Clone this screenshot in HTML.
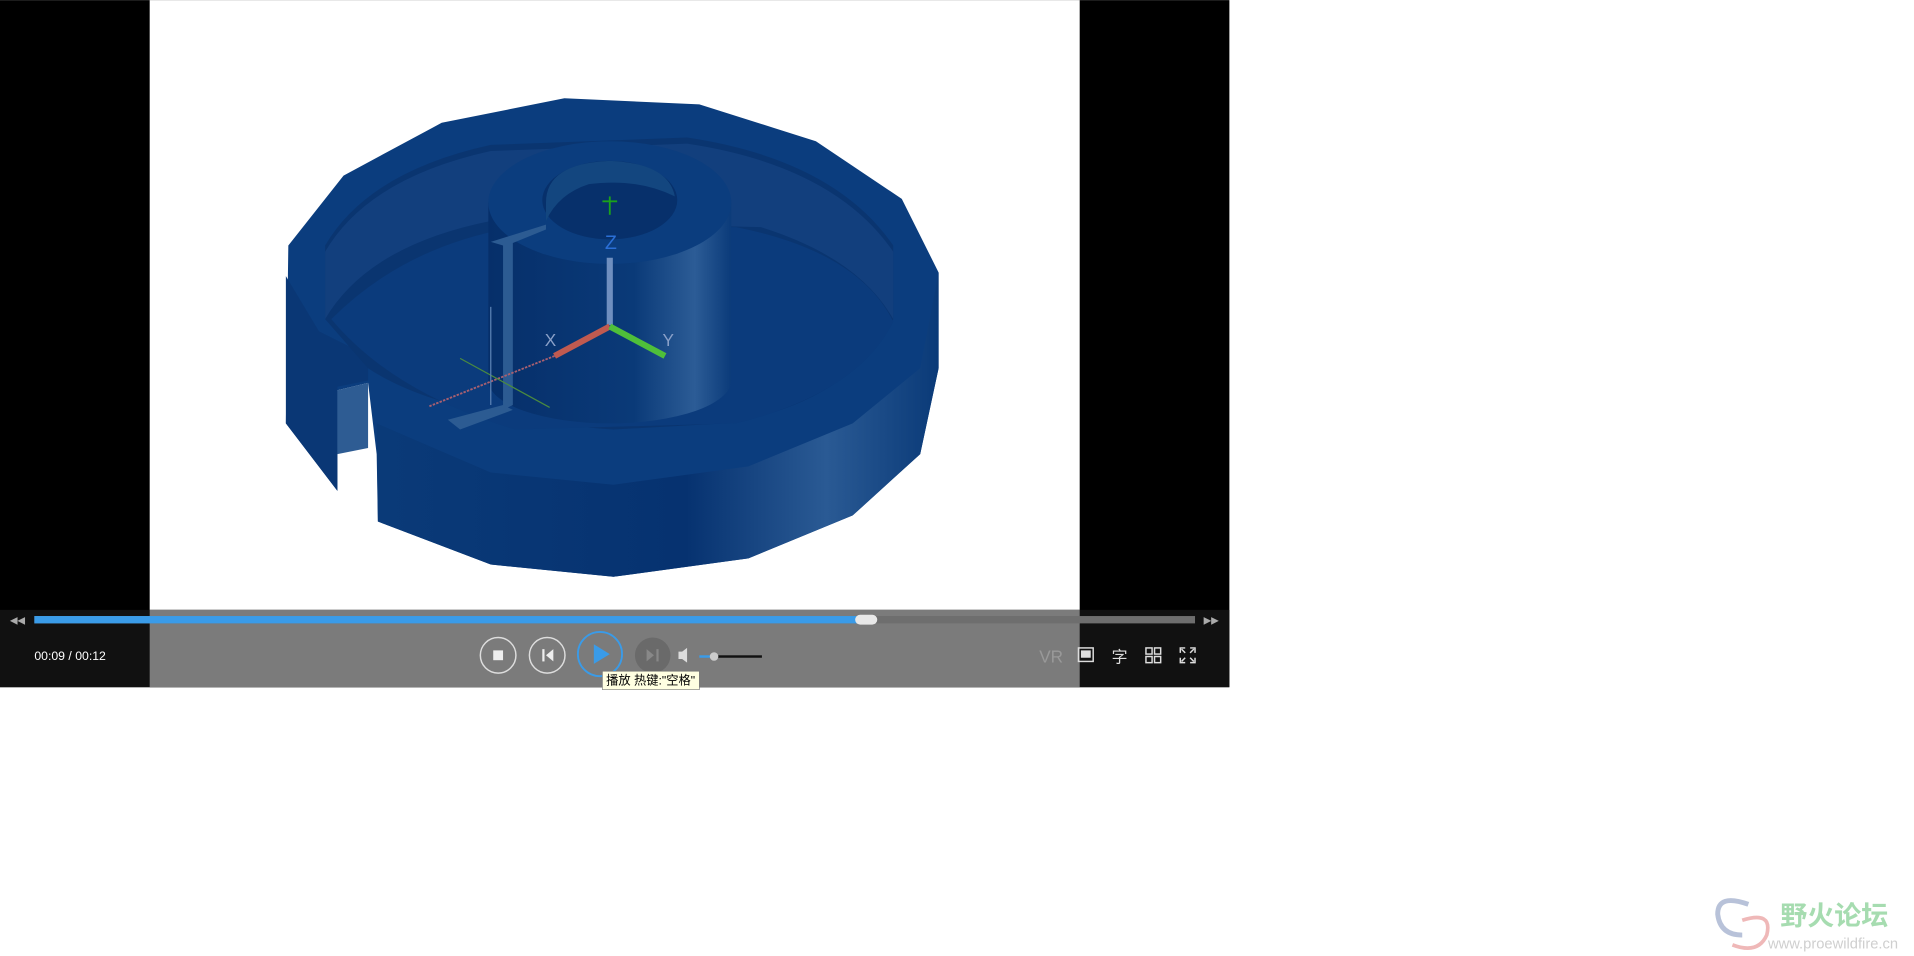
<!DOCTYPE html>
<html><head><meta charset="utf-8"><style>
html,body{margin:0;padding:0;background:#fff;width:1914px;height:956px;overflow:hidden}
svg{display:block}
</style></head><body>
<svg width="1914" height="956" viewBox="0 0 1560 779" xmlns="http://www.w3.org/2000/svg">
<defs>
<linearGradient id="side" x1="0" x2="1" y1="0" y2="0">
<stop offset="0" stop-color="#0a3a78"/><stop offset="0.55" stop-color="#063270"/><stop offset="0.8" stop-color="#2a5a94"/><stop offset="1" stop-color="#0a3a78"/>
</linearGradient>
<linearGradient id="cyl" x1="0" x2="1">
<stop offset="0" stop-color="#062f6a"/><stop offset="0.6" stop-color="#0a3a78"/><stop offset="0.85" stop-color="#2c5c96"/><stop offset="1" stop-color="#0b3b7a"/>
</linearGradient>
</defs>
<rect x="0" y="0" width="1002" height="560" fill="#000"/>
<rect x="122" y="0" width="758" height="497" fill="#fff"/>
<!-- model -->
<polygon points="235,200 280,143 360,100 460,80 570,85 665,115 735,162 765,222 765,300 750,370 695,420 610,455 500,470 400,460 308,425 307,370 300,312 275,318 275,400 233,345" fill="#0b3d7e"/>
<polygon points="307,345 400,385 500,395 610,380 695,345 750,300 765,222 765,300 750,370 695,420 610,455 500,470 400,460 308,425" fill="url(#side)"/>
<polygon points="233,225 233,345 275,400 275,315 300,310 300,290 260,270" fill="#0a3775"/>
<polygon points="275,318 300,312 300,365 275,370" fill="#2e5c93"/>
<!-- inner ring wall -->
<path d="M265,260 L265,200 Q300,140 400,118 L560,112 Q680,130 728,200 L728,260 Q690,330 590,345 L500,350 Q360,340 300,300 Z" fill="#0a3570"/>
<path d="M265,260 L265,205 Q300,145 400,123 L560,117 Q680,135 728,205 L728,260 Q700,210 620,185 L400,180 Q300,200 265,260 Z" fill="#123f7d"/>
<path d="M270,260 Q330,200 420,185 L600,185 Q700,205 728,262 Q700,320 600,345 L420,350 Q320,320 270,260 Z" fill="#0b3b7c"/>
<!-- cylinder -->
<rect x="398" y="165" width="198" height="145" fill="url(#cyl)"/>
<ellipse cx="497" cy="310" rx="99" ry="35" fill="url(#cyl)"/>
<ellipse cx="497" cy="165" rx="99" ry="50" fill="#0b3d7e"/>
<ellipse cx="497" cy="163" rx="55" ry="32" fill="#07306b"/>
<path d="M445,165 Q445,133 497,131 Q545,133 550,160 Q520,145 480,150 Q455,158 445,180 Z" fill="#13467f"/>
<polygon points="400,197 445,183 445,187 418,198 418,330 410,334 410,200" fill="#2c5b92"/>
<polygon points="365,342 410,330 418,334 375,350" fill="#2c5b92"/>
<!-- axes -->
<line x1="497" y1="175" x2="497" y2="160" stroke="#1aa31a" stroke-width="1.5"/>
<line x1="491" y1="164" x2="503" y2="164" stroke="#1aa31a" stroke-width="1.5"/>
<text x="493" y="203" font-family="Liberation Sans,sans-serif" font-size="16" fill="#2b6fd6">Z</text>
<line x1="497" y1="210" x2="497" y2="265" stroke="#6f8fbf" stroke-width="5"/>
<line x1="497" y1="266" x2="452" y2="290" stroke="#c05a50" stroke-width="5"/>
<line x1="497" y1="266" x2="542" y2="290" stroke="#4fbf3a" stroke-width="5"/>
<line x1="452" y1="290" x2="350" y2="331" stroke="#a86070" stroke-width="1.5" stroke-dasharray="2,1"/>
<line x1="375" y1="292" x2="448" y2="332" stroke="#4a8a40" stroke-width="1"/>
<line x1="400" y1="250" x2="400" y2="330" stroke="#5d83b5" stroke-width="1"/>
<text x="444" y="282" font-family="Liberation Sans,sans-serif" font-size="14" fill="#8aa0c8">X</text>
<text x="540" y="282" font-family="Liberation Sans,sans-serif" font-size="14" fill="#8aa0c8">Y</text>
<!-- control bar -->
<rect x="0" y="497" width="1002" height="63" fill="#111"/>
<rect x="122" y="497" width="758" height="63" fill="#7b7b7b"/>
<rect x="28" y="502" width="946" height="6" fill="#6e6e6e"/>
<rect x="28" y="502" width="678" height="6" fill="#3a9be8"/>
<rect x="697" y="501" width="18" height="8" rx="4" fill="#e8e8e8"/>
<text x="8" y="508" font-family="Liberation Sans,sans-serif" font-size="8" fill="#aaa">◀◀</text>
<text x="981" y="508" font-family="Liberation Sans,sans-serif" font-size="8" fill="#aaa">▶▶</text>
<text x="28" y="538" font-family="Liberation Sans,sans-serif" font-size="10" fill="#fff">00:09 / 00:12</text>
<circle cx="406" cy="534" r="14.5" fill="none" stroke="#ddd" stroke-width="1.2"/>
<rect x="402" y="530" width="8" height="8" fill="#eee"/>
<circle cx="446" cy="534" r="14.5" fill="none" stroke="#ddd" stroke-width="1.2"/>
<rect x="442" y="529" width="1.8" height="10" fill="#eee"/><polygon points="451,529 451,539 445,534" fill="#eee"/>
<circle cx="489" cy="533" r="18" fill="none" stroke="#3a9be8" stroke-width="1.5"/>
<polygon points="484,525 484,541 497,533" fill="#3a9be8"/>
<circle cx="532" cy="534" r="14.5" fill="#6a6a6a"/>
<polygon points="527,529 527,539 533,534" fill="#888"/><rect x="535" y="529" width="1.8" height="10" fill="#888"/>
<polygon points="553,531 556,531 560,528 560,540 556,537 553,537" fill="#ddd"/>
<rect x="570" y="534" width="12" height="2" fill="#3a9be8"/>
<rect x="582" y="534" width="39" height="2" fill="#111"/>
<circle cx="582" cy="535" r="3.5" fill="#ccc"/>
<text x="847" y="540" font-family="Liberation Sans,sans-serif" font-size="14" fill="#999">VR</text>
<rect x="879" y="528" width="12" height="11" fill="none" stroke="#ddd" stroke-width="1.2"/><rect x="881" y="530" width="8" height="6" fill="#ddd"/>
<text x="906" y="540" font-family="Liberation Sans,'Noto Sans CJK SC',sans-serif" font-size="13" fill="#ddd">字</text>
<g fill="none" stroke="#ddd" stroke-width="1.2"><rect x="934" y="528" width="5" height="5"/><rect x="941" y="528" width="5" height="5"/><rect x="934" y="535" width="5" height="5"/><rect x="941" y="535" width="5" height="5"/>
<path d="M962,532 v-4 h4 M974,532 v-4 h-4 M962,536 v4 h4 M974,536 v4 h-4 M963,529 l3,3 M973,529 l-3,3 M963,539 l3,-3 M973,539 l-3,-3"/></g>
<rect x="491" y="547" width="79" height="15" fill="#ffffe1" stroke="#777" stroke-width="0.5"/>
<text x="494" y="558" font-family="Liberation Sans,'Noto Sans CJK SC',sans-serif" font-size="10" fill="#000">播放 热键:"空格"</text>
<!-- logo -->
<g opacity="0.6">
<path d="M1425,737 Q1400,728 1400,745 Q1402,762 1420,762" fill="none" stroke="#8a9bc0" stroke-width="4"/>
<path d="M1420,750 Q1445,742 1440,762 Q1433,778 1412,770" fill="none" stroke="#e58a8a" stroke-width="3"/>
</g>
<text x="1451" y="754" font-family="Liberation Sans,'Noto Sans CJK SC',sans-serif" font-size="22" font-weight="bold" fill="#a6dcb0">野火论坛</text>
<text x="1441" y="773" font-family="Liberation Sans,sans-serif" font-size="12" fill="#cfcfcf">www.proewildfire.cn</text>
</svg>
</body></html>
